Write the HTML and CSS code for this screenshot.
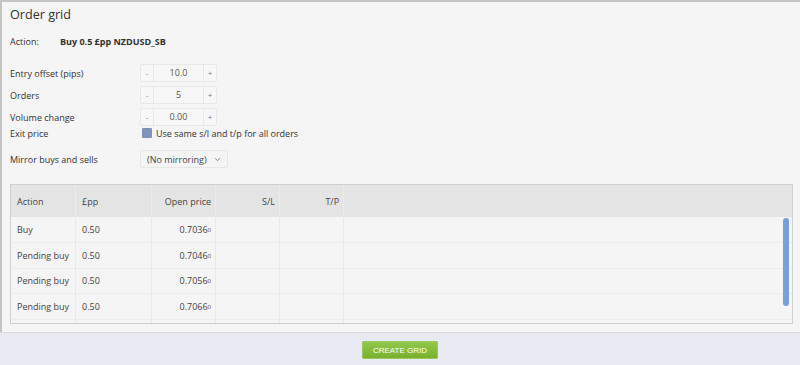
FILE: index.html
```html
<!DOCTYPE html>
<html lang="en">
<head>
  <meta charset="UTF-8">
  <title>Order grid</title>
  <link rel="stylesheet" href="styles.css">
</head>
<body>

  <div class="panel">
    <div class="content">
      <h1>Order grid</h1>

      <div class="action-line">
        <span class="label-short">Action:</span>
        <span class="action-value">Buy 0.5 £pp NZDUSD_SB</span>
      </div>

      <div class="form">
        <div class="row">
          <div class="label">Entry offset (pips)</div>
          <div class="stepper">
            <span class="step">-</span>
            <span class="value">10.0</span>
            <span class="step">+</span>
          </div>
        </div>
        <div class="row">
          <div class="label">Orders</div>
          <div class="stepper">
            <span class="step">-</span>
            <span class="value">5</span>
            <span class="step">+</span>
          </div>
        </div>
        <div class="row">
          <div class="label">Volume change</div>
          <div class="stepper">
            <span class="step">-</span>
            <span class="value">0.00</span>
            <span class="step">+</span>
          </div>
        </div>
        <div class="row row-exit">
          <div class="label">Exit price</div>
          <label class="check"><span class="box"></span>Use same s/l and t/p for all orders</label>
        </div>
        <div class="row row-mirror">
          <div class="label">Mirror buys and sells</div>
          <div class="select">
            <span>(No mirroring)</span>
            <svg width="7" height="5" viewBox="0 0 7 5"><path d="M1 1.2l2.5 2.5 2.5-2.5" fill="none" stroke="#888" stroke-width="1"/></svg>
          </div>
        </div>
      </div>

      <div class="grid">
        <table>
          <thead>
            <tr>
              <th class="c-action">Action</th>
              <th class="c-pp">£pp</th>
              <th class="c-num">Open price</th>
              <th class="c-num">S/L</th>
              <th class="c-num">T/P</th>
              <th></th>
            </tr>
          </thead>
          <tbody id="grid-body"></tbody>
        </table>
        <div class="scrollbar"></div>
      </div>
    </div>

    <div class="footer">
      <button class="btn-create">CREATE GRID</button>
    </div>
  </div>

  <script>
    const orders = [
      { action: 'Buy', pp: '0.50', price: '0.7036', pip: '0' },
      { action: 'Pending buy', pp: '0.50', price: '0.7046', pip: '0' },
      { action: 'Pending buy', pp: '0.50', price: '0.7056', pip: '0' },
      { action: 'Pending buy', pp: '0.50', price: '0.7066', pip: '0' },
    ];

    const body = document.getElementById('grid-body');
    orders.forEach(o => {
      body.innerHTML += `
        <tr>
          <td>${o.action}</td>
          <td>${o.pp}</td>
          <td class="c-num">${o.price}<small>${o.pip}</small></td>
          <td></td>
          <td></td>
          <td></td>
        </tr>
      `;
    });
    // trailing empty row, cut off by the grid edge
    body.innerHTML += '<tr class="filler"><td></td><td></td><td></td><td></td><td></td><td></td></tr>';
  </script>

</body>
</html>
```

FILE: styles.css
```css
* {
  box-sizing: border-box;
}

body {
  margin: 0;
  font-family: "Open Sans", Arial, sans-serif;
  font-size: 9px;
  color: #333;
  background-color: #f5f5f5;
  white-space: nowrap;
}

.panel {
  display: flex;
  flex-direction: column;
  height: 365px;
  border-top: 2px solid #c4c4c4;
  border-left: 2px solid #c4c4c4;
}

.content {
  flex: 1;
  padding: 0 7px 0 8px;
  overflow: hidden;
}

h1 {
  margin: 2px 0 0;
  font-size: 12.6px;
  font-weight: normal;
  line-height: 22px;
  color: #333;
}

.action-line {
  display: flex;
  margin-top: 8px;
  line-height: 16px;
}

.label-short {
  width: 50px;
}

.action-value {
  font-weight: bold;
  color: #333;
}

.form {
  margin-top: 14px;
}

.row {
  display: flex;
  align-items: center;
  height: 18px;
  margin-bottom: 4px;
}

.label {
  width: 130px;
}

.stepper {
  display: flex;
  height: 18px;
  border: 1px solid #e8e8e8;
  border-radius: 2px;
  background-color: #f7f7f7;
  color: #555;
}

.step {
  width: 12px;
  text-align: center;
  line-height: 16px;
  font-size: 8px;
  color: #777;
}

.value {
  width: 51px;
  text-align: center;
  line-height: 16px;
  border-left: 1px solid #e8e8e8;
  border-right: 1px solid #e8e8e8;
}

.row-exit {
  height: 14px;
  margin-top: -4px;
}

.check {
  display: flex;
  align-items: center;
  gap: 4px;
  margin-left: 2px;
}

.box {
  width: 10px;
  height: 10px;
  border-radius: 1px;
  background-color: #7f93b9;
}

.row-mirror {
  margin-top: 10px;
}

.select {
  display: flex;
  align-items: center;
  justify-content: space-between;
  width: 88px;
  height: 18px;
  padding: 0 6px 0 6px;
  border: 1px solid #e8e8e8;
  border-radius: 2px;
  color: #444;
}

.grid {
  position: relative;
  margin-top: 16px;
  height: 140px;
  border: 1px solid #cfcfcf;
  overflow: hidden;
}

table {
  width: 100%;
  border-collapse: collapse;
}

th {
  height: 32px;
  padding: 0 6px;
  font-weight: normal;
  text-align: left;
  background-color: #e4e4e4;
  border-right: 1px solid #ececec;
  color: #444;
}

td {
  height: 25.5px;
  padding: 0 6px;
  border-right: 1px solid #e9e9e9;
  border-bottom: 1px solid #ececec;
  color: #444;
}

th:last-child, td:last-child {
  border-right: none;
}

.c-action {
  width: 63px;
}

.c-pp {
  width: 76px;
}

th.c-num, td.c-num {
  width: 64px;
  text-align: right;
  padding-right: 4px;
}

td small {
  font-size: 6px;
  vertical-align: 1px;
}

.scrollbar {
  position: absolute;
  right: 3px;
  top: 33px;
  width: 6px;
  height: 88px;
  border-radius: 3px;
  background-color: #7aa0dc;
}

.footer {
  display: flex;
  justify-content: center;
  align-items: center;
  height: 33px;
  border-top: 1px solid #d9d9e0;
  background-color: #e9e9f2;
  margin-left: -2px;
}

.btn-create {
  width: 76px;
  height: 18px;
  padding: 0;
  border: 1px solid #9acb5a;
  border-radius: 1px;
  background: linear-gradient(#93c84a, #78b02e);
  color: #fff;
  font-family: "Liberation Sans", Arial, sans-serif;
  font-size: 8px;
  margin-top: 2px;
}
```
